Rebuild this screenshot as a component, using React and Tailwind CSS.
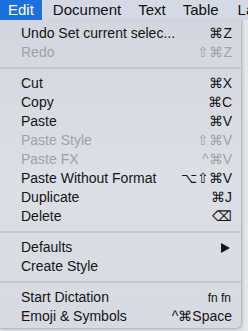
import React from "react";

const items = [
  { label: "Undo Set current selec...", key: "⌘Z" },
  { label: "Redo", key: "⇧⌘Z", off: true },
  { sep: true },
  { label: "Cut", key: "⌘X" },
  { label: "Copy", key: "⌘C" },
  { label: "Paste", key: "⌘V" },
  { label: "Paste Style", key: "⇧⌘V", off: true },
  { label: "Paste FX", key: "^⌘V", off: true },
  { label: "Paste Without Format", key: "⌥⇧⌘V" },
  { label: "Duplicate", key: "⌘J" },
  { label: "Delete", key: "⌫" },
  { sep: true },
  { label: "Defaults", arrow: true },
  { label: "Create Style" },
  { sep: true },
  { label: "Start Dictation", key: "fn fn", small: true },
  { label: "Emoji & Symbols", key: "^⌘Space" },
];

export default function App() {
  return (
    <div className="w-[248px] h-[331px] overflow-hidden bg-[#e4e6eb] font-['Liberation_Sans',Arial,sans-serif]">
      <div className="flex h-[20px] items-center bg-[#d5d9e5] text-[15px] text-[#111] whitespace-nowrap">
        <div className="shrink-0 h-full px-[8px] flex items-center bg-[#1c6fdc] text-white">Edit</div>
        <div className="shrink-0 pl-[11px]">Document</div>
        <div className="shrink-0 pl-[17px]">Text</div>
        <div className="shrink-0 pl-[17px]">Table</div>
        <div className="shrink-0 pl-[19px]">La</div>
      </div>
      <div className="w-[242px] h-[309px] rounded-br-[6px] border-r border-b border-[#b9bcc2] bg-gradient-to-b from-[#d3d6de] via-[#dcdfe6] to-[#d7dae1] pt-[4px] shadow-[1px_1px_3px_rgba(0,0,0,0.15)]">
        {items.map((it, i) =>
          it.sep ? (
            <div key={i} className="h-[12px] flex items-center">
              <div className="h-[2px] w-full bg-[#c6c9d0]" />
            </div>
          ) : (
            <div
              key={i}
              className={`h-[19px] flex items-center justify-between pl-[21px] pr-[9px] text-[14px] ${it.off ? "text-[#9fa2a8]" : "text-[#151515]"}`}
            >
              <span>{it.label}</span>
              {it.arrow ? (
                <svg width="9" height="10" viewBox="0 0 9 10" className="mr-[2px]">
                  <path d="M0 0 L9 5 L0 10 Z" fill="#151515" />
                </svg>
              ) : (
                <span className={it.small ? "text-[12px] pr-[1px]" : ""}>{it.key}</span>
              )}
            </div>
          )
        )}
      </div>
    </div>
  );
}
